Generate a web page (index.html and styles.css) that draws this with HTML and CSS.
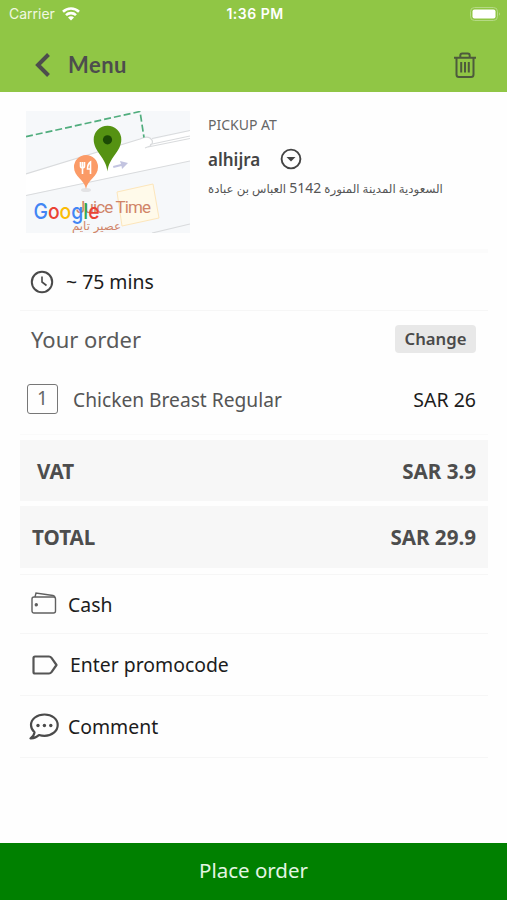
FILE: index.html
```
<!DOCTYPE html>
<html lang="en">
<head>
    <meta charset="UTF-8">
    <meta name="viewport" content="width=device-width, initial-scale=1.0">
    <title>Your order</title>
    <link rel="stylesheet" href="styles.css">
</head>
<body>
    <header>
        <div class="status">
            <div class="carrier">
                <span>Carrier</span>
                <svg width="18" height="14" viewBox="0 0 18 14" fill="none" stroke="#fff" stroke-width="2.6">
                    <path d="M1 4.8a11.5 11.5 0 0 1 16 0M4 8.1a7.2 7.2 0 0 1 10 0"/>
                    <path d="M9 13.5L6 10.5a4.2 4.2 0 0 1 6 0z" fill="#fff" stroke="none"/>
                </svg>
            </div>
            <span class="clock">1:36 PM</span>
            <svg class="battery" width="31" height="14" viewBox="0 0 31 14">
                <rect x="0.5" y="0.5" width="27" height="13" rx="4" fill="none" stroke="#b5d985"/>
                <rect x="2.5" y="2.5" width="23" height="9" rx="2" fill="#fff"/>
                <path d="M29 5.2q1.8 1.8 0 3.6z" fill="#c3e09a"/>
            </svg>
        </div>
        <div class="navbar">
            <svg width="16" height="26" viewBox="0 0 16 26" fill="none" stroke="#4d4d4d" stroke-width="4">
                <path d="M14.500 2.500L4 13l10.500 10.500"/>
            </svg>
            <span class="title">Menu</span>
            <svg class="trash" width="24" height="28" viewBox="0 0 24 28" fill="none" stroke="#4d5a3c" stroke-width="2">
                <path d="M1 6.700h22M7.300 6.500V4.500q0-2 2-2h5.400q2 0 2 2v2M3.500 7v16.500q0 2.500 2.500 2.500h12q2.500 0 2.500-2.500V7"/>
                <path d="M8.200 11v10.500M12 11v10.500M15.800 11v10.500"/>
            </svg>
        </div>
    </header>

    <main>
        <section class="pickup">
            <svg class="map" width="164" height="122" viewBox="0 0 164 122">
                <rect width="164" height="122" fill="#f6f8fa"/>
                <path d="M0 63L114 28q8-4 11 1l39-9v30L0 84z" fill="#fff"/>
                <path d="M0 63L114 28q6-3 10-1q5 4 0 8l-5 2M0 84.500L164 50M126 27.500l38-8M124 33.500l40-8.500M122 36l42-8.500M126 122l38-9" fill="none" stroke="#d9dbdd" stroke-width="1.200"/>
                <path d="M0 25.700L114 0.500l4 26" fill="none" stroke="#50ad7d" stroke-width="1.700" stroke-dasharray="7 3"/>
                <path d="M91 81l36-8 6 34-37 8z" fill="#fffaea" stroke="#fde6bb"/>
                <path d="M87 55l8-2-1-3 8 2-6 6-.5-3-8 2z" fill="#c3c4e0"/>
                <ellipse cx="60" cy="79" rx="5" ry="2" fill="#e3e3e5"/>
                <path d="M60 78C58 68 48 66 48 56a12 12 0 0 1 24 0c0 10-10 12-12 22z" fill="#fb9b67"/>
                <path d="M54.500 51v4q0 2 2 2t2-2v-4M56.500 51v12M64.500 63V51q-3 2-3 7h3" fill="none" stroke="#fff" stroke-width="1.600"/>
                <path d="M81.500 60.500C80 46 67.700 41 67.700 28.500a13.800 13.800 0 0 1 27.600 0c0 12.500-12.300 17.500-13.800 32z" fill="#559212"/>
                <circle cx="81.500" cy="28.800" r="4.600" fill="#1c4a05"/>
                <text class="place" x="50" y="102" textLength="75">Juice Time</text>
                <text class="place-ar" x="70.500" y="118.500" text-anchor="middle" textLength="49" lengthAdjust="spacingAndGlyphs">عصير تايم</text>
                <text class="google" x="7.500" y="108" textLength="66" lengthAdjust="spacingAndGlyphs"><tspan fill="#4285f4">G</tspan><tspan fill="#ea4335">o</tspan><tspan fill="#fbbc05">o</tspan><tspan fill="#4285f4">g</tspan><tspan fill="#34a853">l</tspan><tspan fill="#ea4335">e</tspan></text>
            </svg>
            <div class="branch">
                <div class="label">PICKUP AT</div>
                <div class="branch-name">
                    <span>alhijra</span>
                    <svg width="22" height="22" viewBox="0 0 22 22">
                        <circle cx="11" cy="11" r="9.400" fill="none" stroke="#444" stroke-width="1.900"/>
                        <path d="M6.500 9h9L11 13.500z" fill="#444"/>
                    </svg>
                </div>
                <div class="address" dir="rtl">السعودية المدينة المنورة <span class="number">5142</span> العباس بن عبادة</div>
            </div>
        </section>

        <section class="row time">
            <svg width="24" height="24" viewBox="0 0 24 24" fill="none" stroke="#4a4a4a" stroke-width="2">
                <circle cx="12" cy="12" r="10.200"/>
                <path d="M12 6.500V12l4.500 3.500" stroke-width="1.600"/>
            </svg>
            <span>~ 75 mins</span>
        </section>

        <section class="order">
            <div class="order-head">
                <h2>Your order</h2>
                <button>Change</button>
            </div>
            <div class="item">
                <span class="qty">1</span>
                <span class="item-name">Chicken Breast Regular</span>
                <span class="price">SAR 26</span>
            </div>
        </section>

        <div class="sum vat"><span>VAT</span><span>SAR 3.9</span></div>
        <div class="sum total"><span>TOTAL</span><span>SAR 29.9</span></div>

        <section class="row cash">
            <svg width="26" height="24" viewBox="0 0 26 24" fill="none" stroke="#606060" stroke-width="1.400">
                <rect x="1" y="5" width="23.500" height="16" rx="2"/>
                <path d="M4 5l1-4L22 3.500q2 .5 2 2"/>
                <circle cx="5.300" cy="12.700" r="1" fill="#444"/>
            </svg>
            <span>Cash</span>
        </section>
        <section class="row promo">
            <svg width="26" height="20" viewBox="0 0 26 20" fill="none" stroke="#555" stroke-width="2.200" stroke-linejoin="round">
                <path d="M3 1.500h14q1.500 0 2.500 1.300L24.500 10l-5 7.200q-1 1.300-2.500 1.300H3q-1.500 0-1.500-1.500V3q0-1.500 1.500-1.500z"/>
            </svg>
            <span>Enter promocode</span>
        </section>
        <section class="row comment">
            <svg width="30" height="27" viewBox="0 0 30 27" fill="none" stroke="#4a4a4a" stroke-width="2.200" stroke-linejoin="round">
                <path d="M15.500 1.500C8 1.500 2 6 2 12c0 3 1.500 5.500 3.500 7.300Q5 23 1.500 25.300q5 .2 8.500-3.300c1.700.5 3.500.8 5.500.8C23 22.800 28.700 18 28.700 12S23 1.500 15.500 1.500z"/>
                <g fill="#4a4a4a" stroke="none"><circle cx="9" cy="12.500" r="1.700"/><circle cx="15.400" cy="12.500" r="1.700"/><circle cx="21.800" cy="12.500" r="1.700"/></g>
            </svg>
            <span>Comment</span>
        </section>
    </main>

    <button class="place-order">Place order</button>
</body>
</html>
```
FILE: styles.css
```
* {
    box-sizing: border-box;
}
body {
    margin: 0;
    height: 900px;
    display: flex;
    flex-direction: column;
    background-color: #fefefe;
    font-family: 'Noto Sans', 'DejaVu Sans', sans-serif;
    color: #1c1c1c;
    white-space: nowrap;
    overflow: hidden;
}
svg {
    display: block;
    flex-shrink: 0;
}
header {
    height: 92px;
    background-color: #90c645;
}
.status {
    height: 27px;
    padding: 0 6px 0 9px;
    display: grid;
    grid-template-columns: 1fr auto 1fr;
    align-items: center;
    font-family: Inter, sans-serif;
    font-size: 14px;
    color: #fff;
}
.carrier {
    display: flex;
    align-items: center;
    gap: 7px;
    color: #f0f8e2;
}
.clock {
    font-weight: 600;
    letter-spacing: 0.5px;
}
.battery {
    justify-self: end;
}
.navbar {
    height: 65px;
    padding: 10px 30px 0 34px;
    display: flex;
    align-items: center;
}
.title {
    margin-left: 18px;
    font-family: Lato, sans-serif;
    font-size: 22px;
    font-weight: bold;
    letter-spacing: 0.5px;
    color: #4d4d4d;
}
.trash {
    margin-left: auto;
}
main {
    flex: 1;
    padding: 0 19px 0 20px;
}
.pickup {
    height: 161px;
    padding: 19px 0 0 6px;
    display: flex;
    gap: 18px;
    border-bottom: 4px solid #fbfbfb;
}
.place {
    font-family: Roboto, sans-serif;
    font-size: 17px;
    fill: #d08468;
}
.place-ar {
    font-family: 'DejaVu Sans', sans-serif;
    font-size: 12px;
    fill: #d08468;
}
.google {
    font-family: Inter, sans-serif;
    font-size: 22px;
    font-weight: 500;
}
.label {
    margin-top: 4px;
    font-size: 14px;
    line-height: 20px;
    color: #666;
}
.branch-name {
    margin-top: 13px;
    height: 22px;
    display: flex;
    align-items: center;
    gap: 20px;
    font-size: 17px;
    font-weight: 600;
    color: #444;
}
.address {
    margin-top: 8px;
    font-size: 11.8px;
    line-height: 20px;
    color: #555;
}
.number {
    font-size: 14px;
}
.row {
    display: flex;
    align-items: center;
    font-size: 19.4px;
    border-bottom: 1px solid #f6f6f6;
}
.time {
    height: 58px;
    padding-left: 10px;
    gap: 12px;
}
.order {
    height: 124px;
    border-bottom: 1px solid #fafafa;
}
.order-head {
    height: 55px;
    padding: 0 12px 0 11px;
    display: flex;
    align-items: center;
    justify-content: space-between;
}
h2 {
    margin: 0;
    font-size: 22px;
    font-weight: normal;
    color: #5a5a5a;
}
.order-head button {
    width: 81px;
    height: 28px;
    padding: 0;
    border: none;
    border-radius: 4px;
    background-color: #e8e8e8;
    font-family: inherit;
    font-size: 16.7px;
    font-weight: 600;
    color: #4a4a4a;
}
.item {
    height: 66px;
    padding: 0 12px 0 7px;
    display: flex;
    align-items: center;
}
.qty {
    width: 31px;
    height: 30px;
    border: 1.5px solid #777;
    border-radius: 3px;
    font-size: 19px;
    line-height: 27px;
    text-align: center;
    color: #666;
}
.item-name {
    margin-left: 15px;
    font-size: 19.2px;
    color: #555;
}
.price {
    margin-left: auto;
    font-size: 19.5px;
}
.sum {
    height: 61px;
    margin-top: 5px;
    padding: 0 12px;
    display: flex;
    align-items: center;
    justify-content: space-between;
    background-color: #f7f7f7;
    font-size: 20.6px;
    font-weight: bold;
    color: #4d4d4d;
}
.vat {
    padding-left: 17px;
}
.total {
    height: 62px;
}
.cash {
    height: 60px;
    margin-top: 6px;
    padding-left: 11px;
    gap: 11px;
    border-top: 1px solid #f6f6f6;
}
.promo {
    height: 62px;
    padding-left: 12px;
    gap: 12px;
}
.comment {
    height: 62px;
    padding-left: 9px;
    gap: 9px;
}
.place-order {
    height: 57px;
    padding: 0 0 4px;
    border: none;
    background-color: #008000;
    font-family: inherit;
    font-size: 20.5px;
    color: #e3f5e3;
}
```
